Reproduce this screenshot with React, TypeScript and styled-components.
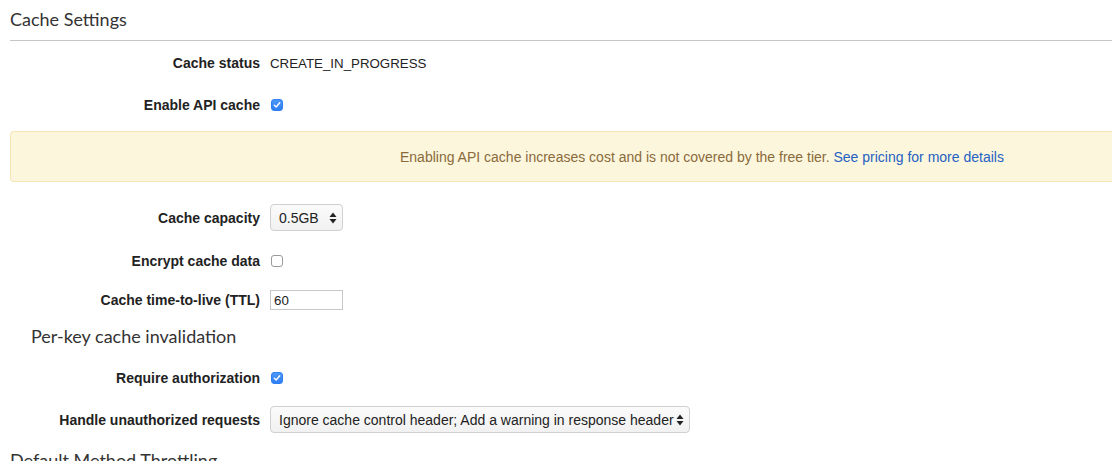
import React from "react";
import styled, { createGlobalStyle } from "styled-components";

const GlobalStyle = createGlobalStyle`
  html, body {
    margin: 0;
    padding: 0;
    background: #ffffff;
    overflow: hidden;
  }
  body {
    font-family: "Liberation Sans", Arial, sans-serif;
    font-size: 13px;
    color: #222;
  }
`;

const texts = {
  title: "Cache Settings",
  status: "Cache status",
  statusValue: "CREATE_IN_PROGRESS",
  enable: "Enable API cache",
  alert: "Enabling API cache increases cost and is not covered by the free tier. ",
  alertLink: "See pricing for more details",
  capacity: "Cache capacity",
  encrypt: "Encrypt cache data",
  ttl: "Cache time-to-live (TTL)",
  perKey: "Per-key cache invalidation",
  requireAuth: "Require authorization",
  unauthorized: "Handle unauthorized requests",
  unauthorizedValue: "Ignore cache control header; Add a warning in response header",
  throttling: "Default Method Throttling",
};

const Page = styled.div`
  padding-left: 10px;
  width: 1102px;
`;

const SectionTitle = styled.h2<{ $indent?: number; $top?: number }>`
  margin: ${(p) => p.$top ?? 0}px 0 0 ${(p) => p.$indent ?? 0}px;
  font-family: Lato, "Open Sans", sans-serif;
  font-weight: 400;
  font-size: 18px;
  line-height: 24px;
  color: #333;
`;

const Header = styled.div`
  padding-top: 7px;
  padding-bottom: 9px;
  border-bottom: 1px solid #c6c6c6;
  margin-right: -20px;
`;

const FormRow = styled.div<{ $top: number; $height?: number }>`
  display: grid;
  grid-template-columns: 250px auto;
  column-gap: 10px;
  align-items: center;
  margin-top: ${(p) => p.$top}px;
  height: ${(p) => p.$height ?? 20}px;
`;

const Label = styled.div`
  text-align: right;
  font-weight: 700;
  font-size: 14px;
  color: #222;
  white-space: nowrap;
`;

const Value = styled.div`
  display: flex;
  align-items: center;
  font-size: 13.3px;
  color: #222;
`;

const Box = styled.span<{ $checked?: boolean }>`
  display: inline-flex;
  align-items: center;
  justify-content: center;
  box-sizing: border-box;
  width: 12px;
  height: 12px;
  border-radius: 3px;
  margin-left: 1px;
  background: ${(p) => (p.$checked ? "linear-gradient(#4c98f7, #2f7ef3)" : "#fff")};
  border: 1px solid ${(p) => (p.$checked ? "#2f7ef3" : "#9a9a9a")};
`;

const Checkbox = ({ checked }: { checked?: boolean }) => (
  <Box $checked={checked}>
    {checked && (
      <svg width="8" height="8" viewBox="0 0 8 8">
        <path d="M1.3 4.2 L3.2 6 L6.7 1.8" fill="none" stroke="#fff" strokeWidth="1.4" strokeLinecap="round" strokeLinejoin="round" />
      </svg>
    )}
  </Box>
);

const Alert = styled.div`
  margin-top: 16px;
  margin-right: -40px;
  box-sizing: border-box;
  height: 51px;
  display: flex;
  align-items: center;
  padding-left: 389px;
  background: #fcf6dd;
  border: 1px solid #f7e4b8;
  border-right: none;
  border-radius: 4px 0 0 4px;
  color: #8a6a3b;
  font-size: 14px;
`;

const AlertLink = styled.a`
  color: #2561c2;
  text-decoration: none;
`;

const SelectWrap = styled.div<{ $width: number }>`
  position: relative;
  box-sizing: border-box;
  width: ${(p) => p.$width}px;
  height: 27px;
  border: 1px solid #d0d0d0;
  border-radius: 4px;
  background: linear-gradient(#fbfbfb, #f1f1f1);
  display: flex;
  align-items: center;
  padding-left: 8px;
  font-size: 14px;
  color: #222;
  white-space: nowrap;
`;

const Arrows = styled.svg`
  position: absolute;
  right: 5px;
  top: 7px;
`;

const Select = ({ width, value }: { width: number; value: string }) => (
  <SelectWrap $width={width}>
    {value}
    <Arrows width="8" height="12" viewBox="0 0 8 12">
      <path d="M4 0.5 L7.5 5 L0.5 5 Z" fill="#222" />
      <path d="M4 11.5 L7.5 7 L0.5 7 Z" fill="#222" />
    </Arrows>
  </SelectWrap>
);

const TextInput = styled.input`
  box-sizing: border-box;
  width: 73px;
  height: 20px;
  border: 1px solid #c8c8c8;
  padding: 0 3px;
  font-family: "Liberation Sans", Arial, sans-serif;
  font-size: 13.3px;
  color: #222;
  outline: none;
`;

export default function App() {
  return (
    <>
      <GlobalStyle />
      <Page>
        <Header>
          <SectionTitle>{texts.title}</SectionTitle>
        </Header>
        <FormRow $top={12}>
          <Label>{texts.status}</Label>
          <Value>{texts.statusValue}</Value>
        </FormRow>
        <FormRow $top={22}>
          <Label>{texts.enable}</Label>
          <Value>
            <Checkbox checked />
          </Value>
        </FormRow>
        <Alert>
          <span>
            {texts.alert}
            <AlertLink href="#">{texts.alertLink}</AlertLink>
          </span>
        </Alert>
        <FormRow $top={22} $height={27}>
          <Label>{texts.capacity}</Label>
          <Value>
            <Select width={73} value="0.5GB" />
          </Value>
        </FormRow>
        <FormRow $top={20}>
          <Label>{texts.encrypt}</Label>
          <Value>
            <Checkbox />
          </Value>
        </FormRow>
        <FormRow $top={19}>
          <Label>{texts.ttl}</Label>
          <Value>
            <TextInput defaultValue="60" />
          </Value>
        </FormRow>
        <SectionTitle $indent={21} $top={14}>
          {texts.perKey}
        </SectionTitle>
        <FormRow $top={20}>
          <Label>{texts.requireAuth}</Label>
          <Value>
            <Checkbox checked />
          </Value>
        </FormRow>
        <FormRow $top={18} $height={27}>
          <Label>{texts.unauthorized}</Label>
          <Value>
            <Select width={420} value={texts.unauthorizedValue} />
          </Value>
        </FormRow>
        <SectionTitle $top={15}>{texts.throttling}</SectionTitle>
      </Page>
    </>
  );
}
